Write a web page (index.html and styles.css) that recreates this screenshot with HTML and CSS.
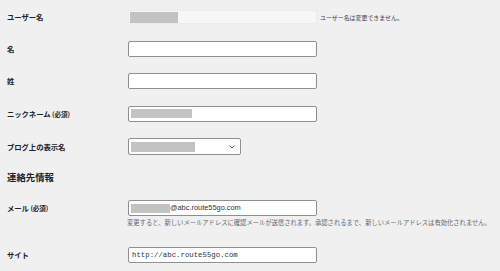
FILE: index.html
```html
<!DOCTYPE html>
<html lang="ja">
<head>
<meta charset="utf-8">
<link rel="stylesheet" href="styles.css">
</head>
<body>
<div class="form">
  <div class="row row-first">
    <div class="label">ユーザー名</div>
    <div class="field">
      <div class="input disabled"><span class="mask mask-user"></span></div>
      <span class="note">ユーザー名は変更できません。</span>
    </div>
  </div>
  <div class="row">
    <div class="label">名</div>
    <div class="field"><div class="input"></div></div>
  </div>
  <div class="row">
    <div class="label">姓</div>
    <div class="field"><div class="input"></div></div>
  </div>
  <div class="row">
    <div class="label">ニックネーム <span class="req">(必須)</span></div>
    <div class="field"><div class="input"><span class="mask mask-nick"></span></div></div>
  </div>
  <div class="row">
    <div class="label">ブログ上の表示名</div>
    <div class="field">
      <div class="input select"><span class="mask mask-display"></span>
        <svg class="chev" width="6" height="4" viewBox="0 0 6 4"><path d="M0.7 0.8 L3 3 L5.3 0.8" fill="none" stroke="#50575e" stroke-width="1"/></svg>
      </div>
    </div>
  </div>
  <h2 class="heading">連絡先情報</h2>
  <div class="row row-email">
    <div class="label">メール <span class="req">(必須)</span></div>
    <div class="field"><div class="input"><span class="mask mask-mail"></span><span class="val">@abc.route55go.com</span></div></div>
  </div>
  <p class="desc">変更すると、新しいメールアドレスに確認メールが送信されます。承認されるまで、新しいメールアドレスは有効化されません。</p>
  <div class="row row-site">
    <div class="label">サイト</div>
    <div class="field"><div class="input"><span class="val mono">http://abc.route55go.com</span></div></div>
  </div>
</div>
</body>
</html>
```
FILE: styles.css
```css
html, body {
  margin: 0;
  padding: 0;
  background: #f0f0f1;
  width: 500px;
  height: 271px;
  overflow: hidden;
}
body {
  font-family: "Noto Sans CJK JP", "Noto Sans", sans-serif;
  color: #1d2327;
}
.form {
  padding-left: 7px;
  display: flex;
  flex-direction: column;
}
.row {
  display: flex;
  align-items: center;
  margin-top: 16.5px;
}
.row-first { margin-top: 10px; }
.label {
  width: 121px;
  font-size: 7.4px;
  font-weight: 700;
  line-height: 10px;
  letter-spacing: -0.1px;
}
.req { font-size: 6.6px; }
.field {
  display: flex;
  align-items: center;
}
.input {
  box-sizing: border-box;
  width: 189px;
  height: 16px;
  background: #fff;
  border: 1px solid #8c8f94;
  border-radius: 2px;
  display: flex;
  align-items: center;
  padding-left: 2px;
  position: relative;
}
.input.disabled {
  height: 14px;
  background: #f6f7f7;
  border-color: #ececec;
  padding-left: 1px;
}
.input.select {
  width: 113px;
  height: 17px;
}
.chev {
  position: absolute;
  right: 5px;
  top: 6px;
}
.mask {
  display: block;
  background: #c3c3c3;
  height: 9px;
}
.mask-user { width: 48px; height: 11px; }
.mask-nick { width: 61px; }
.mask-display { width: 64px; height: 10px; }
.mask-mail { width: 39px; height: 9px; }
.val {
  font-family: "Liberation Sans", "Noto Sans", sans-serif;
  font-size: 7.4px;
  color: #2c3338;
  line-height: 10px;
}
.mono {
  font-family: "Liberation Mono", monospace;
  font-size: 7.35px;
  padding-left: 1px;
}
.note {
  margin-left: 3px;
  font-size: 5.95px;
  color: #3c434a;
  white-space: nowrap;
}
.heading {
  margin: 16px 0 0 0;
  font-size: 9.4px;
  font-weight: 700;
  line-height: 12px;
}
.row-email { margin-top: 17px; }
.desc {
  margin: 2px 0 0 120px;
  font-size: 6.3px;
  line-height: 10px;
  color: #646970;
  white-space: nowrap;
}
.row-site { margin-top: 19px; }
```
